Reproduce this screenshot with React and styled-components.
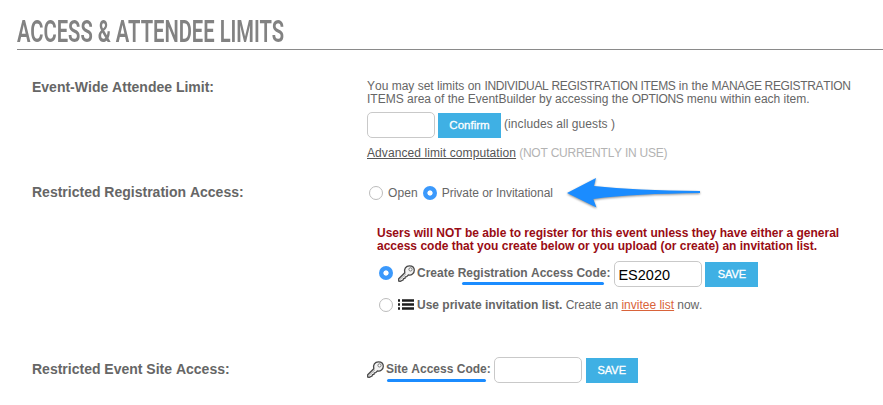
import React from "react";
import styled, { createGlobalStyle } from "styled-components";

const Global = createGlobalStyle`
  * { box-sizing: border-box; }
  body { margin: 0; background: #fff; }
`;

const Page = styled.main`
  width: 883px;
  height: 405px;
  overflow: hidden;
  background: #fff;
  color: #666;
  font: 12px/13px "Liberation Sans", Arial, sans-serif;
  font-kerning: none;
`;

const Header = styled.header`
  height: 50px;
  margin-left: 17px;
  padding-top: 14px;
  border-bottom: 1px solid #8a8a8a;
`;

const Title = styled.h1`
  display: inline-block;
  margin: 0;
  white-space: nowrap;
  font: 600 31px/36px Roboto, sans-serif;
  color: #828282;
  transform: scaleX(0.651);
  transform-origin: left center;
`;

const Section = styled.section`
  display: grid;
  grid-template-columns: 335px 1fr;
  margin-left: 32px;
  padding-top: ${(p) => p.$top}px;
  height: ${(p) => p.$height}px;
`;

const Label = styled.h2`
  margin: ${(p) => p.$top || 0}px 0 0;
  font-size: 14px;
  line-height: 16px;
  font-weight: 700;
  color: #666;
`;

const Line = styled.div`
  display: flex;
  align-items: center;
  white-space: pre;
  height: ${(p) => p.$height || 13}px;
  margin-top: ${(p) => p.$top || 0}px;
  margin-left: ${(p) => p.$indent || 0}px;
`;

const Text = styled.span`
  position: relative;
  letter-spacing: ${(p) => p.$track || 0}px;
  margin-left: ${(p) => p.$gap || 0}px;
  margin-bottom: ${(p) => p.$lift || 0}px;
  color: ${(p) => p.$color || "inherit"};
  font-weight: ${(p) => (p.$bold ? 700 : 400)};
`;

const Caps = styled.span`
  letter-spacing: -0.33px;
`;

const Link = styled.a`
  color: ${(p) => p.$color || "#555"};
  letter-spacing: ${(p) => p.$track || 0}px;
  text-decoration: underline;
  text-underline-offset: 1px;
`;

const Field = styled.input`
  width: ${(p) => p.$width}px;
  height: 26px;
  margin: 0 0 0 ${(p) => p.$gap || 0}px;
  padding: 1px 3px 0;
  border: 1px solid #c9c9c9;
  border-radius: 5px;
  background: #fff;
  color: #000;
  font: 14.5px "Liberation Sans", Arial, sans-serif;
  outline: none;
`;

const Button = styled.button`
  width: ${(p) => p.$width}px;
  height: 25px;
  margin: 1px 0 0 ${(p) => p.$gap}px;
  padding: 0 0 1px;
  border: 0;
  background: #3fb0e4;
  color: #fff;
  font: ${(p) => p.$size || 11}px "Liberation Sans", Arial, sans-serif;
  -webkit-text-stroke: 0.3px #fff;
`;

const Radio = styled.span`
  flex: none;
  width: 14px;
  height: 14px;
  margin-left: ${(p) => p.$gap || 0}px;
  margin-bottom: ${(p) => p.$lift || 0}px;
  border-radius: 50%;
  border: ${(p) => (p.$on ? "0" : "1px solid #bcbcbc")};
  background: ${(p) => (p.$on ? "radial-gradient(circle, #fff 2.2px, #3b99fc 3px)" : "#fff")};
`;

const Marker = styled.span`
  position: absolute;
  left: ${(p) => p.$left}px;
  top: ${(p) => p.$top}px;
  width: ${(p) => p.$width}px;
  height: 3px;
  border-radius: 2px;
  background: #1b8cff;
`;

const Glyph = styled.svg`
  flex: none;
  display: block;
  overflow: visible;
  margin-left: ${(p) => p.$gap || 0}px;
  margin-bottom: ${(p) => p.$lift || 0}px;
`;

const KeyIcon = (props) => (
  <Glyph width="17" height="17" viewBox="0 0 17 17" {...props}>
    <path
      d="M6.8 7.8C5.6 4 8 .8 11.4 .8c2.8 0 4.9 1.8 4.9 4.5 0 3.2-2.9 5.4-5.9 4.7L8.7 11.6l-1.4.2-.3 1.5-1.5.3-.4 1.4-2.9 1.4-1.5-.4v-2.2z"
      fill="#f2f2f2"
      stroke="#484848"
      strokeWidth="1.3"
      strokeLinejoin="round"
    />
    <path d="M1.6 14.9l6.4-6.2" stroke="#999" strokeWidth="0.9" />
    <circle cx="12.5" cy="4.4" r="1.6" fill="#fff" stroke="#777" strokeWidth="1" />
  </Glyph>
);

const ListIcon = (props) => (
  <Glyph width="16" height="11" viewBox="0 0 16 11" {...props}>
    <path
      d="M0 1.5h2M0 5.5h2M0 9.5h2M4 1.5h12M4 5.5h12M4 9.5h12"
      stroke="#1c1c1c"
      strokeWidth="2.3"
    />
  </Glyph>
);

const ArrowIcon = (props) => (
  <Glyph width="134" height="30" viewBox="0 0 134 30" {...props}>
    <path
      d="M0 15L29 0L27 8C55 11 90 12.4 133 13v2C90 15.6 55 17 26.3 21L29.5 29.5z"
      fill="#1b8cff"
      filter="drop-shadow(0 1px 1.2px rgba(0,0,0,.45))"
    />
  </Glyph>
);

export default function App() {
  return (
    <Page>
      <Global />
      <Header>
        <Title>ACCESS &amp; ATTENDEE LIMITS</Title>
      </Header>
      <Section $top={29} $height={133}>
        <Label>Event-Wide Attendee Limit:</Label>
        <div>
          <Line $top={1}>
            <Text>
              You may set limits on <Caps>INDIVIDUAL REGISTRATION ITEMS</Caps> in the{" "}
              <Caps>MANAGE REGISTRATION</Caps>
            </Text>
          </Line>
          <Line>
            <Text>
              ITEMS area of the EventBuilder by accessing the <Caps>OPTIONS</Caps> menu within each item.
            </Text>
          </Line>
          <Line $top={6} $height={26}>
            <Field $width={68} />
            <Button $width={63} $gap={3} $size={11.5}>Confirm</Button>
            <Text $gap={3} $lift={2} $track={0.08}>(includes all guests )</Text>
          </Line>
          <Line $top={9}>
            <Link $track={0.09}>Advanced limit computation</Link>
            <Text $color="#b3b3b3" $track={-0.24}> (NOT CURRENTLY IN USE)</Text>
          </Line>
        </div>
      </Section>
      <Section $top={0} $height={174}>
        <Label $top={1}>Restricted Registration Access:</Label>
        <div>
          <Line $height={20} $indent={2}>
            <Radio />
            <Text $gap={5} $track={0.1}>Open</Text>
            <Radio $on $gap={5} />
            <Text $gap={5} $track={-0.04}>Private or Invitational</Text>
            <ArrowIcon $gap={14} />
          </Line>
          <Line $top={24} $indent={10}>
            <Text $bold $color="#990c14">
              Users will NOT be able to register for this event unless they have either a general
            </Text>
          </Line>
          <Line $indent={10}>
            <Text $bold $color="#990c14">
              access code that you create below or you upload (or create) an invitation list.
            </Text>
          </Line>
          <Line $top={8} $height={26} $indent={12}>
            <Radio $on $lift={2} />
            <KeyIcon $gap={5} $lift={2} />
            <Text $bold $gap={2} $lift={2}>
              Create Registration Access Code:
              <Marker $left={45} $top={15} $width={142} />
            </Text>
            <Field $width={88} $gap={4} defaultValue="ES2020" />
            <Button $width={53} $gap={3}>SAVE</Button>
          </Line>
          <Line $top={11} $height={14} $indent={12}>
            <Radio />
            <ListIcon $gap={5} $lift={2} />
            <Text $bold $gap={3}>Use private invitation list.</Text>
            <Text $track={-0.03}> Create an </Text>
            <Link $color="#d9633a">invitee list</Link>
            <Text $track={-0.1}> now.</Text>
          </Line>
        </div>
      </Section>
      <Section $top={0} $height={40}>
        <Label $top={4}>Restricted Event Site Access:</Label>
        <Line $height={26}>
          <KeyIcon $lift={1} />
          <Text $bold $gap={2} $lift={2}>
            Site Access Code:
            <Marker $left={1} $top={16} $width={99} />
          </Text>
          <Field $width={88} $gap={3} />
          <Button $width={52} $gap={4}>SAVE</Button>
        </Line>
      </Section>
    </Page>
  );
}
